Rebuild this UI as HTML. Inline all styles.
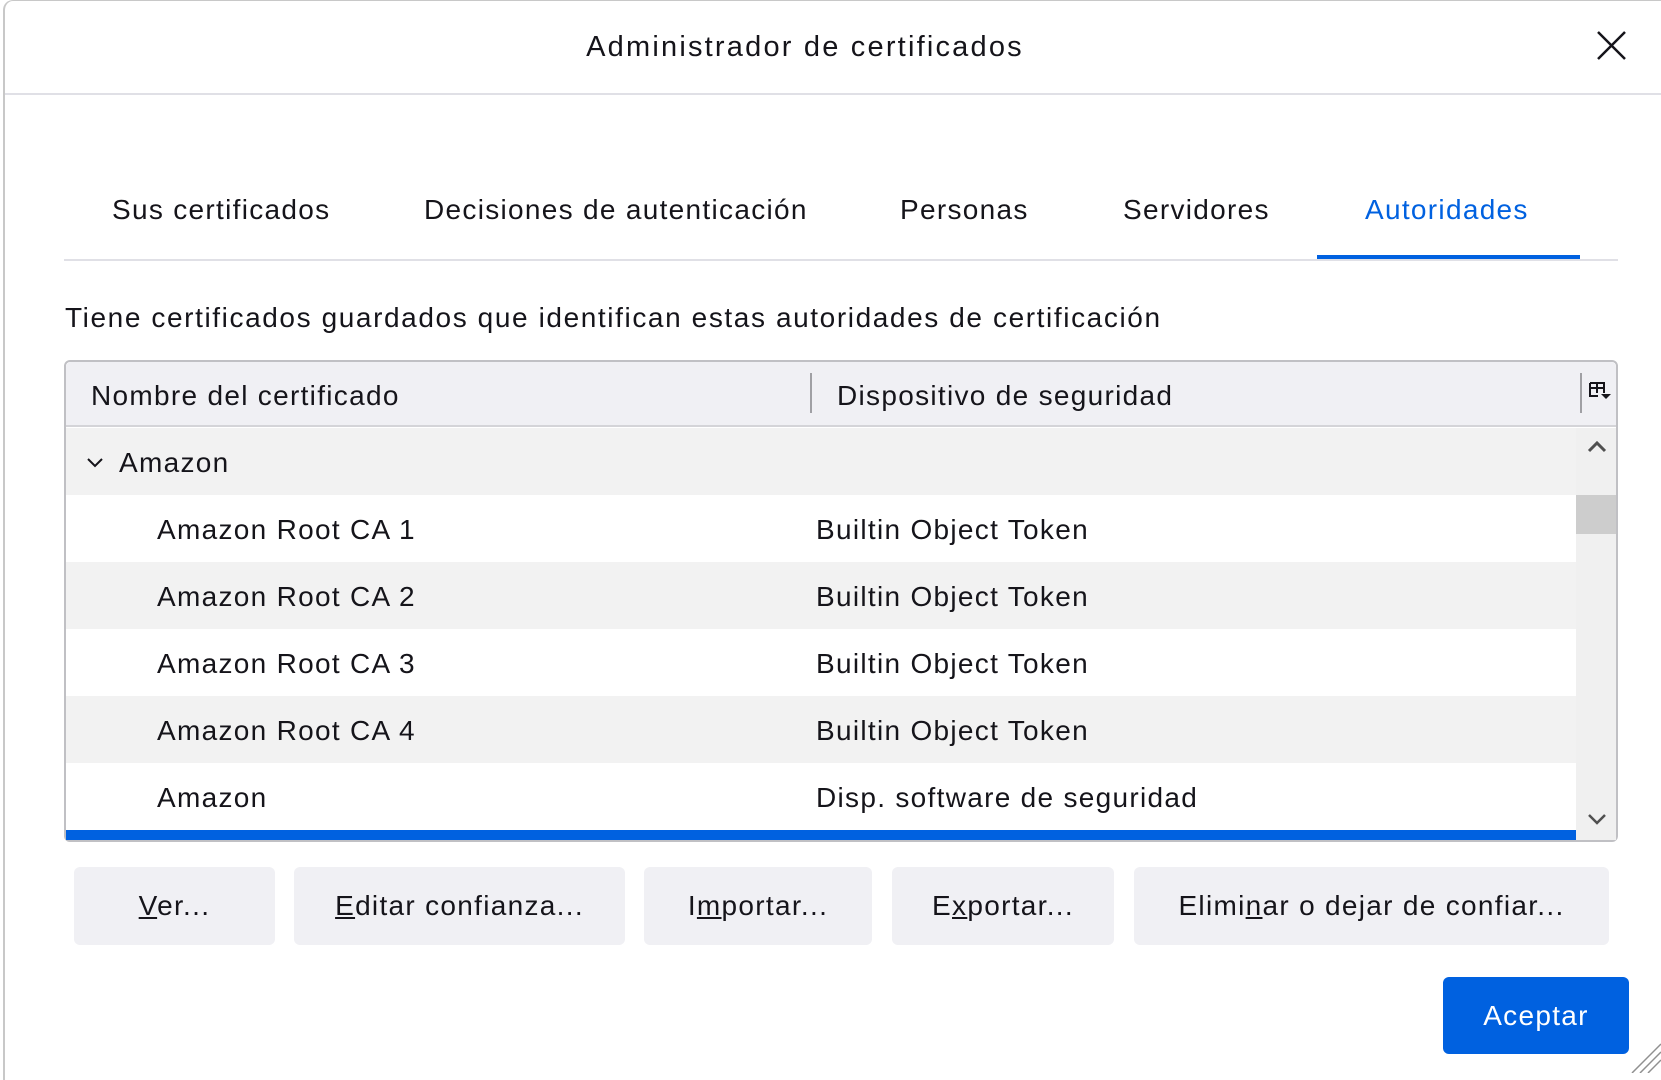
<!DOCTYPE html>
<html><head><meta charset="utf-8"><style>
*{margin:0;padding:0;box-sizing:border-box}
body{width:1661px;height:1073px;background:#fff;font-family:"Liberation Sans",sans-serif;color:#15141a;position:relative;overflow:hidden;letter-spacing:1.3px}
.a{position:absolute;white-space:nowrap}
.win{position:absolute;left:3px;top:0;width:1670px;height:1080px;border-left:2px solid #c8c8c8;border-top:1px solid #c8c8c8;border-radius:10px 0 0 0}
.t{font-size:28px;line-height:34px}
.row{position:absolute;left:66px;width:1510px;height:67px}
.btn{position:absolute;top:867px;height:78px;background:#f0f0f4;border-radius:6px;font-size:28px;line-height:78px;text-align:center}
</style></head><body>
<div class="win"></div>
<div class="a t" style="left:0;width:1610px;text-align:center;top:30px;font-size:29px;letter-spacing:2.2px">Administrador de certificados</div>
<svg class="a" style="left:1596px;top:30px" width="31" height="31"><path d="M2 2L29 29M29 2L2 29" stroke="#15141a" stroke-width="2.5"/></svg>
<div class="a" style="left:5px;top:93px;width:1656px;height:2px;background:#e0e0e6"></div>

<div class="a t" style="left:112px;top:193px">Sus certificados</div>
<div class="a t" style="left:424px;top:193px">Decisiones de autenticación</div>
<div class="a t" style="left:900px;top:193px">Personas</div>
<div class="a t" style="left:1123px;top:193px">Servidores</div>
<div class="a t" style="left:1365px;top:193px;color:#0061e0">Autoridades</div>
<div class="a" style="left:64px;top:259px;width:1554px;height:2px;background:#e0e0e6"></div>
<div class="a" style="left:1317px;top:255px;width:263px;height:4px;background:#0061e0"></div>

<div class="a t" style="left:65px;top:301px;letter-spacing:1.6px">Tiene certificados guardados que identifican estas autoridades de certificación</div>

<div class="a" style="left:64px;top:360px;width:1554px;height:482px;border:2px solid #c0c0c4;border-radius:6px;overflow:hidden;background:#fff">
</div>
<div class="a" style="left:66px;top:362px;width:1550px;height:65px;background:#f0f0f4;border-radius:5px 5px 0 0;border-bottom:2px solid #d4d4d8"></div>
<div class="a t" style="left:91px;top:379px">Nombre del certificado</div>
<div class="a" style="left:810px;top:373px;width:2px;height:40px;background:#a0a0a4"></div>
<div class="a t" style="left:837px;top:379px">Dispositivo de seguridad</div>
<div class="a" style="left:1580px;top:373px;width:2px;height:40px;background:#a0a0a4"></div>
<svg class="a" style="left:1589px;top:382px" width="26" height="22"><path d="M1 1H15V11M1 1V14H9M1 6H15M8 1V11" stroke="#15141a" stroke-width="2" fill="none"/><path d="M12 12H22L17 17Z" fill="#15141a"/></svg>

<div class="row" style="top:428px;background:#f2f2f2"></div>
<svg class="a" style="left:86px;top:457px" width="18" height="12"><path d="M2 2L9 9L16 2" stroke="#15141a" stroke-width="2" fill="none"/></svg>
<div class="a t" style="left:119px;top:446px">Amazon</div>
<div class="row" style="top:495px;background:#fff"></div>
<div class="row" style="top:562px;background:#f2f2f2"></div>
<div class="row" style="top:629px;background:#fff"></div>
<div class="row" style="top:696px;background:#f2f2f2"></div>
<div class="row" style="top:763px;background:#fff"></div>
<div class="row" style="top:830px;height:10px;background:#0061e0"></div>
<div class="a t" style="left:157px;top:513px">Amazon Root CA 1</div><div class="a t" style="left:816px;top:513px">Builtin Object Token</div>
<div class="a t" style="left:157px;top:580px">Amazon Root CA 2</div><div class="a t" style="left:816px;top:580px">Builtin Object Token</div>
<div class="a t" style="left:157px;top:647px">Amazon Root CA 3</div><div class="a t" style="left:816px;top:647px">Builtin Object Token</div>
<div class="a t" style="left:157px;top:714px">Amazon Root CA 4</div><div class="a t" style="left:816px;top:714px">Builtin Object Token</div>
<div class="a t" style="left:157px;top:781px">Amazon</div><div class="a t" style="left:816px;top:781px">Disp. software de seguridad</div>

<div class="a" style="left:1576px;top:428px;width:40px;height:412px;background:#f0f0f0"></div>
<div class="a" style="left:1576px;top:495px;width:40px;height:39px;background:#cdcdcd"></div>
<svg class="a" style="left:1586px;top:440px" width="22" height="14"><path d="M3 11L11 3L19 11" stroke="#505050" stroke-width="3" fill="none"/></svg>
<svg class="a" style="left:1586px;top:812px" width="22" height="14"><path d="M3 3L11 11L19 3" stroke="#505050" stroke-width="2.5" fill="none"/></svg>

<div class="btn" style="left:74px;width:201px"><u>V</u>er...</div>
<div class="btn" style="left:294px;width:331px"><u>E</u>ditar confianza...</div>
<div class="btn" style="left:644px;width:228px">I<u>m</u>portar...</div>
<div class="btn" style="left:892px;width:222px">E<u>x</u>portar...</div>
<div class="btn" style="left:1134px;width:475px">Elimi<u>n</u>ar o dejar de confiar...</div>
<div class="btn" style="left:1443px;top:977px;width:186px;height:77px;line-height:77px;background:#0061e0;color:#fff">Aceptar</div>
<svg class="a" style="left:1628px;top:1040px" width="33" height="33"><path d="M4 33L33 4M12 33L33 12M20 33L33 20" stroke="#909090" stroke-width="1.5"/></svg>
</body></html>
